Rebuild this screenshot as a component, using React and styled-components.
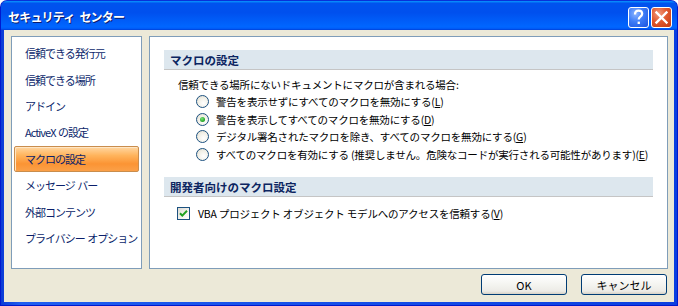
import React, { useState } from 'react';
import styled, { createGlobalStyle } from 'styled-components';

const GlobalStyle = createGlobalStyle`
  html, body {
    margin: 0;
    padding: 0;
    background: #ffffff;
  }
  body {
    font-family: "Noto Sans CJK JP", "Noto Sans", sans-serif;
    font-size: 10.5px;
    letter-spacing: -0.2px;
  }
`;

const navItems = [
  '信頼できる発行元',
  '信頼できる場所',
  'アドイン',
  'ActiveX の設定',
  'マクロの設定',
  'メッセージ バー',
  '外部コンテンツ',
  'プライバシー オプション',
];

const macroOptions = [
  { label: '警告を表示せずにすべてのマクロを無効にする', key: 'L' },
  { label: '警告を表示してすべてのマクロを無効にする', key: 'D' },
  { label: 'デジタル署名されたマクロを除き、すべてのマクロを無効にする', key: 'G' },
  { label: 'すべてのマクロを有効にする (推奨しません。危険なコードが実行される可能性があります)', key: 'E' },
];

function HelpIcon() {
  return (
    <svg width="21" height="21" viewBox="0 0 21 21">
      <path
        d="M7 7.5 C7 4.6 8.6 3.6 10.6 3.6 C12.8 3.6 14.2 4.9 14.2 6.8 C14.2 8.6 13 9.3 11.9 10.1 C11 10.8 10.7 11.3 10.7 12.6"
        fill="none"
        stroke="#fff"
        strokeWidth="2.2"
      />
      <rect x="9.6" y="14.6" width="2.3" height="2.4" fill="#fff" />
    </svg>
  );
}

function CloseIcon() {
  return (
    <svg width="21" height="21" viewBox="0 0 21 21">
      <path d="M5.5 5.5 L15.5 15.5 M15.5 5.5 L5.5 15.5" stroke="#fff" strokeWidth="2.4" strokeLinecap="square" />
    </svg>
  );
}

function CheckMark() {
  return (
    <svg width="9" height="9" viewBox="0 0 9 9">
      <path d="M1 4.2 L3.3 6.6 L8 1.8" fill="none" stroke="#21a121" strokeWidth="2" />
    </svg>
  );
}

function Accel({ k }) {
  return (
    <>
      (<u>{k}</u>)
    </>
  );
}

export default function App() {
  const [selected, setSelected] = useState(4);
  const [macro, setMacro] = useState(1);
  const [trustVba, setTrustVba] = useState(true);

  return (
    <>
      <GlobalStyle />
      <Window>
        <TitleBar>
          <Title>セキュリティ センター</Title>
          <TitleButtons>
            <CaptionButton>
              <HelpIcon />
            </CaptionButton>
            <CaptionButton $close>
              <CloseIcon />
            </CaptionButton>
          </TitleButtons>
        </TitleBar>
        <Body>
          <Panels>
            <NavPanel>
              {navItems.map((item, i) => (
                <NavItem key={item} $active={i === selected} onClick={() => setSelected(i)}>
                  {item}
                </NavItem>
              ))}
            </NavPanel>
            <ContentPanel>
              <SectionHeader>マクロの設定</SectionHeader>
              <SectionBody>
                <Prompt>信頼できる場所にないドキュメントにマクロが含まれる場合:</Prompt>
                <RadioList>
                  {macroOptions.map((opt, i) => (
                    <OptionRow key={opt.key} onClick={() => setMacro(i)}>
                      <Radio $checked={i === macro} />
                      <span>
                        {opt.label}
                        <Accel k={opt.key} />
                      </span>
                    </OptionRow>
                  ))}
                </RadioList>
              </SectionBody>
              <SectionHeader>開発者向けのマクロ設定</SectionHeader>
              <CheckRow onClick={() => setTrustVba(!trustVba)}>
                <Checkbox>{trustVba && <CheckMark />}</Checkbox>
                <span>
                  VBA プロジェクト オブジェクト モデルへのアクセスを信頼する
                  <Accel k="V" />
                </span>
              </CheckRow>
            </ContentPanel>
          </Panels>
          <ButtonRow>
            <Button>OK</Button>
            <Button>キャンセル</Button>
          </ButtonRow>
        </Body>
      </Window>
    </>
  );
}

const Window = styled.div`
  width: 678px;
  height: 306px;
  box-sizing: border-box;
  display: flex;
  flex-direction: column;
  border-radius: 7px 7px 0 0;
  border: 1px solid #0019cf;
  border-top-color: #0831d9;
  overflow: hidden;
  padding: 0 3px 3px 3px;
  background: linear-gradient(90deg, #0a3bd6 0%, #1f5ef0 3%, #0b3fe0 100%);
`;

const TitleBar = styled.div`
  height: 29px;
  flex: none;
  display: flex;
  align-items: center;
  justify-content: space-between;
  margin: 0 -3px;
  padding: 0 5px 0 7px;
  background: linear-gradient(
    180deg,
    #0997ff 0%,
    #0053ee 8%,
    #0050ee 40%,
    #0066ff 88%,
    #0060fc 94%,
    #0040d8 100%
  );
`;

const Title = styled.div`
  color: #ffffff;
  font-weight: bold;
  font-size: 12px;
  letter-spacing: -0.8px;
  word-spacing: 3px;
  text-shadow: 1px 1px 0 #0a1c6e;
  padding-top: 1px;
`;

const TitleButtons = styled.div`
  display: flex;
  gap: 2px;
  padding-top: 4px;
`;

const CaptionButton = styled.div`
  width: 21px;
  height: 21px;
  box-sizing: border-box;
  border: 1px solid #ffffff;
  border-radius: 3px;
  display: flex;
  align-items: center;
  justify-content: center;
  background: ${(p) =>
    p.$close
      ? 'radial-gradient(circle at 35% 30%, #f19b7e 0%, #e0582e 45%, #c23a12 100%)'
      : 'radial-gradient(circle at 35% 30%, #8cb4ff 0%, #3d7cf7 45%, #1a52de 100%)'};
  svg {
    display: block;
    margin: -1px;
  }
`;

const Body = styled.div`
  flex: 1;
  display: flex;
  flex-direction: column;
  background: #ece9d8;
  padding: 6px 6px 8px 7px;
  gap: 5px;
`;

const Panels = styled.div`
  flex: 1;
  display: flex;
  gap: 7px;
`;

const NavPanel = styled.div`
  width: 131px;
  flex: none;
  box-sizing: border-box;
  background: #ffffff;
  border: 1px solid #7f9db9;
  padding: 3px 2px;
  display: flex;
  flex-direction: column;
`;

const NavItem = styled.div`
  height: 26.4px;
  box-sizing: border-box;
  display: flex;
  align-items: center;
  padding-left: 10px;
  color: #0b1f6b;
  font-size: 11px;
  letter-spacing: -1px;
  word-spacing: 1px;
  white-space: pre;
  cursor: pointer;
  border: 1px solid ${(p) => (p.$active ? '#c98d4d' : 'transparent')};
  border-radius: 2px;
  background: ${(p) =>
    p.$active
      ? 'linear-gradient(180deg, #ffd7a3 0%, #ffb45c 35%, #fb9434 70%, #fba048 100%)'
      : 'transparent'};
  box-shadow: ${(p) => (p.$active ? 'inset 1px 1px 0 #ffe6c4' : 'none')};
`;

const ContentPanel = styled.div`
  flex: 1;
  min-width: 0;
  box-sizing: border-box;
  background: #ffffff;
  border: 1px solid #7f9db9;
  padding: 13px 14px 0 14px;
  display: flex;
  flex-direction: column;
`;

const SectionHeader = styled.div`
  height: 20px;
  flex: none;
  box-sizing: border-box;
  display: flex;
  align-items: center;
  padding-left: 6px;
  background: #dde7ee;
  border-bottom: 1px solid #c5c5c5;
  color: #0c2561;
  font-weight: bold;
  font-size: 11.5px;
  letter-spacing: 0;
`;

const SectionBody = styled.div`
  padding: 6px 0 14px 14px;
  color: #000000;
`;

const Prompt = styled.div`
  height: 17px;
  display: flex;
  align-items: center;
`;

const RadioList = styled.div`
  display: flex;
  flex-direction: column;
  padding-left: 18px;
`;

const OptionRow = styled.div`
  height: 17.5px;
  display: flex;
  align-items: center;
  gap: 7px;
  cursor: pointer;
  white-space: nowrap;
  u {
    text-underline-offset: 1px;
  }
`;

const Radio = styled.div`
  width: 13px;
  height: 13px;
  box-sizing: border-box;
  flex: none;
  border-radius: 50%;
  border: 1px solid #1c5180;
  background: radial-gradient(circle at 60% 65%, #ffffff 0%, #f1efe6 55%, #d9d6c8 100%);
  display: flex;
  align-items: center;
  justify-content: center;
  &::after {
    content: '';
    display: ${(p) => (p.$checked ? 'block' : 'none')};
    width: 5px;
    height: 5px;
    border-radius: 50%;
    background: radial-gradient(circle at 40% 35%, #7be37b 0%, #21a121 70%);
  }
`;

const CheckRow = styled.div`
  display: flex;
  align-items: center;
  gap: 8px;
  padding: 9px 0 0 13px;
  color: #000000;
  cursor: pointer;
  white-space: nowrap;
`;

const Checkbox = styled.div`
  width: 13px;
  height: 13px;
  box-sizing: border-box;
  flex: none;
  border: 1px solid #1c5180;
  background: linear-gradient(135deg, #dcdbd4 0%, #f4f3ee 60%, #ffffff 100%);
  display: flex;
  align-items: center;
  justify-content: center;
`;

const ButtonRow = styled.div`
  height: 20px;
  flex: none;
  display: flex;
  justify-content: flex-end;
  gap: 14px;
  padding-right: 1px;
`;

const Button = styled.div`
  width: 86px;
  height: 21px;
  box-sizing: border-box;
  border: 1px solid #003c74;
  border-radius: 3px;
  background: linear-gradient(180deg, #ffffff 0%, #f4f4f0 50%, #ecebe6 85%, #d6d0c5 100%);
  display: flex;
  align-items: center;
  justify-content: center;
  color: #000000;
  font-size: 11px;
  letter-spacing: 0;
  cursor: pointer;
`;
